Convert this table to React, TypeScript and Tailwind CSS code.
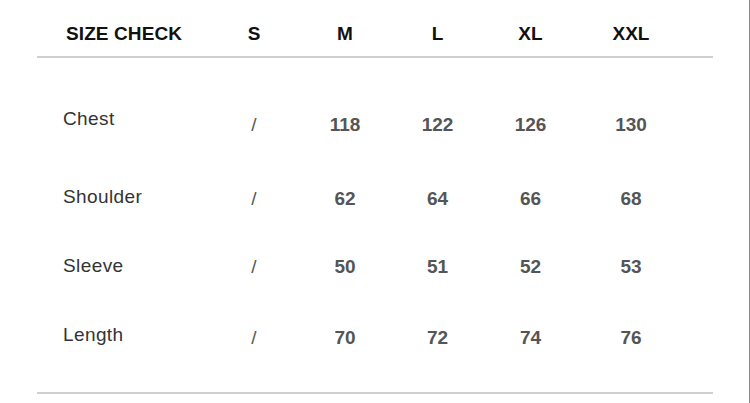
import React from 'react';

const sizes = ['S', 'M', 'L', 'XL', 'XXL'];

const rows = [
  { name: 'Chest', values: ['/', '118', '122', '126', '130'], h: 'h-[74px]', lift: 'mb-[12px]' },
  { name: 'Shoulder', values: ['/', '62', '64', '66', '68'], h: 'h-[74px]', lift: 'mb-[4px]' },
  { name: 'Sleeve', values: ['/', '50', '51', '52', '53'], h: 'h-[62px]', lift: 'mb-[2px]' },
  { name: 'Length', values: ['/', '70', '72', '74', '76'], h: 'h-[80px]', lift: 'mb-[6px]' },
];

// column widths tuned so the size columns sit over their headings
const cols = 'grid grid-cols-[172px_90px_92px_93px_93px_108px]';

export default function App() {
  return (
    <div
      className="w-[750px] h-[403px] bg-white border-r border-[#8a8a8a] overflow-hidden"
      style={{ fontFamily: '"Liberation Sans", Arial, sans-serif' }}
    >
      <div className="ml-[37px] w-[676px]">
        <div className={`${cols} h-[58px] pt-[23px] border-b-2 border-[#d0d0d0] text-[19px] leading-[22px] font-bold text-[#111]`}>
          <div className="pl-[29px] tracking-[0.1px]">SIZE CHECK</div>
          {sizes.map((s) => (
            <div key={s} className="text-center">
              {s}
            </div>
          ))}
        </div>

        <div className="pt-[30px] pb-[14px] border-b-2 border-[#d0d0d0]">
          {rows.map((row) => (
            <div key={row.name} className={`${cols} ${row.h} items-center`}>
              <div className={`pl-[26px] text-[19px] leading-[22px] text-[#333] tracking-[0.4px] ${row.lift}`}>
                {row.name}
              </div>
              {row.values.map((v, i) => (
                <div
                  key={i}
                  className={`text-center text-[19px] leading-[22px] text-[#555] ${v === '/' ? 'font-normal' : 'font-bold'}`}
                >
                  {v}
                </div>
              ))}
            </div>
          ))}
        </div>
      </div>
    </div>
  );
}
